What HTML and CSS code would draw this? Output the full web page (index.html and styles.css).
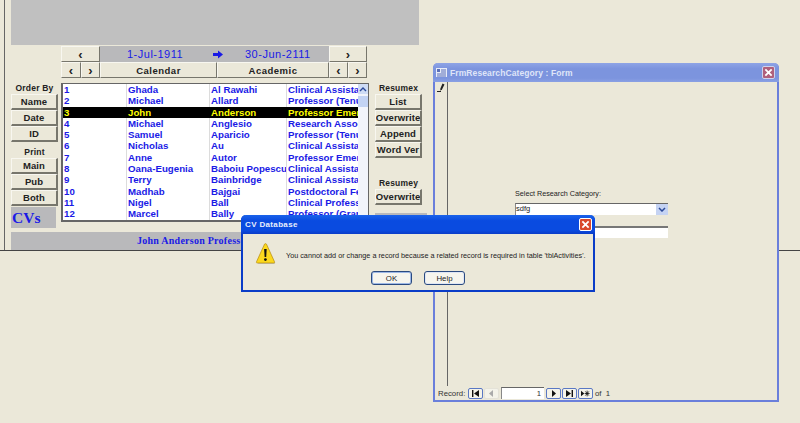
FILE: index.html
```html
<!DOCTYPE html>
<html lang="en">
<head>
<meta charset="utf-8">
<title>CV Database</title>
<link rel="stylesheet" href="styles.css">
</head>
<body>
<div class="desktop">
  <div class="backdrop">
    <div class="form">
      <div class="banner"></div>
      <div class="nav">
        <div class="nav-row">
          <button class="btn nav-wide nav-wide-first">&lsaquo;</button>
          <div class="range">
            <span class="range-from">1-Jul-1911</span>
            <svg class="range-arrow" viewBox="0 0 10 9"><path d="M0 3h5V0.4L10 4.500 5 8.600V6H0z"/></svg>
            <span class="range-to">30-Jun-2111</span>
          </div>
          <button class="btn nav-wide">&rsaquo;</button>
        </div>
        <div class="nav-row">
          <button class="btn nav-small nav-small-first">&lsaquo;</button>
          <button class="btn nav-small">&rsaquo;</button>
          <button class="btn nav-cal">Calendar</button>
          <button class="btn nav-aca">Academic</button>
          <button class="btn nav-small">&lsaquo;</button>
          <button class="btn nav-small">&rsaquo;</button>
        </div>
      </div>
      <div class="main">
        <div class="side side-left">
          <div class="side-label">Order By</div>
          <button class="btn side-btn">Name</button>
          <button class="btn side-btn">Date</button>
          <button class="btn side-btn">ID</button>
          <div class="side-label print-label">Print</div>
          <button class="btn side-btn">Main</button>
          <button class="btn side-btn">Pub</button>
          <button class="btn side-btn">Both</button>
          <div class="cvs">CVs</div>
        </div>
        <div class="list">
          <div class="rows">
            <div class="row"><span>1</span><span>Ghada</span><span>Al Rawahi</span><span>Clinical Assistant</span></div>
            <div class="row"><span>2</span><span>Michael</span><span>Allard</span><span>Professor (Tenure)</span></div>
            <div class="row row-on"><span>3</span><span>John</span><span>Anderson</span><span>Professor Emeritus</span></div>
            <div class="row"><span>4</span><span>Michael</span><span>Anglesio</span><span>Research Associate</span></div>
            <div class="row"><span>5</span><span>Samuel</span><span>Aparicio</span><span>Professor (Tenure)</span></div>
            <div class="row"><span>6</span><span>Nicholas</span><span>Au</span><span>Clinical Assistant</span></div>
            <div class="row"><span>7</span><span>Anne</span><span>Autor</span><span>Professor Emeritus</span></div>
            <div class="row"><span>8</span><span>Oana-Eugenia</span><span>Baboiu Popescu</span><span>Clinical Assistant</span></div>
            <div class="row"><span>9</span><span>Terry</span><span>Bainbridge</span><span>Clinical Assistant</span></div>
            <div class="row"><span>10</span><span>Madhab</span><span>Bajgai</span><span>Postdoctoral Fellow</span></div>
            <div class="row"><span>11</span><span>Nigel</span><span>Ball</span><span>Clinical Professor</span></div>
            <div class="row"><span>12</span><span>Marcel</span><span>Bally</span><span>Professor (Grant)</span></div>
          </div>
          <div class="scroll">
            <div class="scroll-up"><svg viewBox="0 0 8 5"><path d="M1 4l3-3 3 3" fill="none" stroke="#2b4a9a" stroke-width="1.4"/></svg></div>
            <div class="scroll-thumb"></div>
          </div>
        </div>
        <div class="side side-right">
          <div class="side-label">Resumex</div>
          <button class="btn side-btn">List</button>
          <button class="btn side-btn">Overwrite</button>
          <button class="btn side-btn">Append</button>
          <button class="btn side-btn">Word Ver</button>
          <div class="side-label resumey">Resumey</div>
          <button class="btn side-btn">Overwrite</button>
          <div class="side-grey"></div>
        </div>
      </div>
      <div class="footer-bar">John Anderson Professor Emeritus</div>
    </div>
  </div>

  <section class="subform">
    <header class="subform-title">
      <svg class="form-icon" viewBox="0 0 11 9"><rect width="11" height="9" fill="#e8ecf8"/><rect x="1" y="1" width="3" height="3" fill="#5a6fb8"/><path d="M5 2h5M5 4h5M1 6h9M1 8h9" stroke="#5a6fb8"/></svg>
      <span class="subform-name">FrmResearchCategory : Form</span>
      <span class="close close-faded"><svg viewBox="0 0 10 10"><path d="M1.500 1.500l7 7M8.500 1.500l-7 7" stroke="#fff" stroke-width="2"/></svg></span>
    </header>
    <div class="subform-body">
      <div class="selector">
        <svg class="pencil" viewBox="0 0 9 9"><path d="M0 8.500h4" stroke="#222" fill="none"/><path d="M5.500 0.500l2 1-2.500 5-1.800 1.200.2-2.200z" fill="#222"/></svg>
      </div>
      <div class="detail">
        <div class="field-label">Select Research Category:</div>
        <div class="combo"><span>sdfg</span><span class="combo-btn"><svg viewBox="0 0 8 5"><path d="M1 1l3 3 3-3" fill="none" stroke="#2b4a9a" stroke-width="1.500"/></svg></span></div>
        <div class="textbox"></div>
      </div>
    </div>
    <footer class="recnav">
      <span class="rec-label">Record:</span>
      <span class="rec-btn"><svg viewBox="0 0 9 7"><path d="M1 0h1.400v7H1zM8 0v7L3 3.500z"/></svg></span>
      <span class="rec-btn rec-off"><svg viewBox="0 0 9 7"><path d="M6 0v7L2 3.500z"/></svg></span>
      <span class="rec-input">1</span>
      <span class="rec-btn"><svg viewBox="0 0 9 7"><path d="M3 0v7l4-3.500z"/></svg></span>
      <span class="rec-btn"><svg viewBox="0 0 9 7"><path d="M1 0v7l5-3.500zM6.600 0H8v7H6.600z"/></svg></span>
      <span class="rec-btn"><svg viewBox="0 0 11 7"><path d="M0 0v7l4-3.500z"/><path d="M7.500 0v7M4.500 3.500h6M5.400 1l4.200 5M9.600 1L5.400 6" stroke="#111" fill="none"/></svg></span>
      <span class="rec-of">of&nbsp; 1</span>
    </footer>
  </section>

  <section class="dialog">
    <header class="dialog-title">
      <span class="dialog-name">CV Database</span>
      <span class="close"><svg viewBox="0 0 10 10"><path d="M1.500 1.500l7 7M8.500 1.500l-7 7" stroke="#fff" stroke-width="2"/></svg></span>
    </header>
    <div class="dialog-body">
      <div class="dialog-msg">
        <svg class="warn" viewBox="0 0 21 22">
          <path d="M10 1L20 20.500H3z" fill="#6b6b6b" opacity=".55"/>
          <path d="M9.500 1.200c.6-.8 1.400-.8 2 0l8 17.600c.3.800 0 1.200-.8 1.200H2.300c-.8 0-1.100-.4-.8-1.200z" fill="#fbd81e" stroke="#b58a10" stroke-width=".7"/>
          <path d="M9.100 6h2.600l-.5 8h-1.600z" fill="#111"/><circle cx="10.400" cy="16.600" r="1.400" fill="#111"/>
        </svg>
        <p class="dialog-text">You cannot add or change a record because a related record is required in table 'tblActivities'.</p>
      </div>
      <div class="dialog-actions">
        <button class="xp-btn xp-default">OK</button>
        <button class="xp-btn">Help</button>
      </div>
    </div>
  </section>
</div>
</body>
</html>
```

FILE: styles.css
```css
* { box-sizing: border-box; }
html, body { margin: 0; padding: 0; }
body { width: 800px; height: 423px; overflow: hidden; background: #ebe8d9; font-family: "Liberation Sans", Arial, sans-serif; }
button { font-family: inherit; padding: 0; margin: 0; }
.desktop { position: relative; width: 800px; height: 423px; overflow: hidden; }

.backdrop { height: 251px; border-bottom: 1px solid #444; padding-left: 4px; }
.form { height: 250px; border-left: 1px solid #666; padding-left: 6px; }
.banner { width: 408px; height: 45px; background: #c0c0c0; }

.btn {
  display: flex; align-items: center; justify-content: center;
  background: #ebe8d9; color: #222; font-weight: bold; font-size: 9.500px; letter-spacing: .1px;
  border: 1px solid; border-color: #f8f7f0 #77766c #77766c #f8f7f0; white-space: nowrap; overflow: hidden;
}

.nav { margin: 1px 0 0 50px; width: 307px; display: flex; flex-direction: column; }
.nav-row { display: flex; height: 16px; }
.nav-wide { width: 38px; font-size: 13px; }
.nav-wide-first { width: 39px; }
.nav-small { width: 19px; font-size: 13px; }
.nav-small-first { width: 20px; }
.nav-cal { width: 117px; letter-spacing: .5px; }
.nav-aca { width: 112px; letter-spacing: .5px; }
.range { width: 229px; background: #b9b9bb; display: flex; align-items: center; color: #1a1ae6; font-size: 11px; letter-spacing: .5px; }
.range-from { margin-left: 27px; width: 86px; }
.range-arrow { width: 10px; height: 9px; fill: #1a1ae6; }
.range-to { margin-left: 22px; }

.main { display: flex; height: 144px; margin-top: 5px; align-items: flex-start; }
.side { display: flex; flex-direction: column; width: 47px; }
.side-btn { flex: none; height: 16px; border-right-width: 2px; border-bottom-width: 2px; width: 47px; }
.side-label { height: 11px; font-size: 8.500px; font-weight: bold; color: #222; text-align: center; line-height: 11px; letter-spacing: .2px; }
.print-label { margin-top: 7px; height: 6px; line-height: 6px; margin-bottom: 3px; }
.cvs { width: 45px; height: 21px; margin-top: 1px; background: #b9b9bb; color: #1a1ae6; font-family: "Liberation Serif", serif; font-weight: bold; font-size: 15.500px; line-height: 21px; padding-left: 1px; }
.side-right { margin-left: 6px; }
.resumey { margin-top: 20px; }
.side-grey { width: 52px; height: 12px; flex: none; background: #b9b9bb; margin-top: 8px; }

.list { width: 308px; height: 139px; margin-left: 3px; display: flex; background: #fff; border: 1px solid #666; border-left-width: 2px; border-bottom-width: 2px; overflow: hidden; }
.rows { width: 295px; display: grid; grid-auto-rows: 11.300px; align-content: start; }
.row { display: grid; grid-template-columns: 63px 83px 77px 72px; font-size: 9.700px; font-weight: bold; color: #1a1ae6; line-height: 11.300px; }
.row span { overflow: hidden; white-space: nowrap; padding-left: 1px; border-left: 1px solid #dcdcdc; }
.row span:first-child { border-left: 0; }
.row-on { background: #000; color: #ff0; }
.row-on span { border-left-color: #000; }
.scroll { width: 10px; background: #f2f4fb; }
.scroll-up { height: 10px; background: #cfdcf5; display: flex; align-items: center; justify-content: center; }
.scroll-up svg { width: 8px; height: 5px; }
.scroll-thumb { height: 11px; margin-top: 2px; background: #c3d3f4; }

.footer-bar { width: 408px; height: 18px; margin-top: 5px; background: #b9b9bb; color: #1a1ae6; font-family: "Liberation Serif", serif; font-weight: bold; font-size: 10px; letter-spacing: .25px; line-height: 18px; padding-left: 126px; white-space: nowrap; overflow: hidden; }

.subform { position: absolute; left: 433px; top: 63px; width: 346px; height: 339px; display: flex; flex-direction: column; background: #ebe8d9; border: 2px solid #6a7fdb; border-top: 0; border-radius: 5px 5px 0 0; }
.subform-title { flex: none; height: 19px; margin: 0 -2px; background: linear-gradient(#8ea4e6, #7c94de 30%, #7c94de 80%, #8aa0e4); border-radius: 5px 5px 0 0; display: flex; align-items: center; padding: 0 4px 0 3px; color: #dfe5f8; font-size: 8.500px; font-weight: bold; letter-spacing: .1px; }
.form-icon { width: 11px; height: 9px; margin-right: 3px; }
.subform-name { flex: 1; }
.close { width: 13px; height: 13px; border: 1px solid #fff; border-radius: 2px; background: #d9482b; display: flex; align-items: center; justify-content: center; }
.close svg { width: 9px; height: 9px; }
.close-faded { background: #b0607c; border-color: #cfd3ec; }
.subform-body { flex: 1; display: flex; min-height: 0; }
.selector { width: 13px; border-right: 1px solid #666; }
.pencil { display: block; width: 9px; height: 9px; margin: 1px 0 0 2px; }
.detail { flex: 1; padding: 107px 0 0 67px; }
.field-label { font-size: 7.200px; color: #222; height: 14px; line-height: 10px; }
.combo { width: 153px; height: 12px; background: #fff; border-top: 1px solid #666; border-left: 1px solid #888; display: flex; justify-content: space-between; font-size: 7.500px; line-height: 10px; color: #222; }
.combo-btn { width: 12px; background: #c5d3f3; display: flex; align-items: center; justify-content: center; }
.combo-btn svg { width: 8px; height: 5px; }
.textbox { width: 153px; height: 12px; margin-top: 11px; background: #fff; border-top: 2px solid #777; }
.recnav { flex: none; height: 14px; display: flex; align-items: center; padding-left: 3px; font-size: 7.800px; color: #333; }
.rec-label { width: 30px; }
.rec-btn { width: 15px; height: 11px; border: 1px solid #5a78c4; border-radius: 2px; background: #f4f3ea; display: flex; align-items: center; justify-content: center; margin-right: 1px; }
.rec-btn svg { width: 9px; height: 7px; fill: #111; }
.rec-off { border-color: #e4e2d8; }
.rec-off svg { fill: #aaa; }
.rec-input { width: 43px; height: 12px; margin: 0 2px 0 1px; background: #fff; border-top: 1px solid #666; border-left: 1px solid #888; text-align: right; padding-right: 3px; line-height: 11px; }
.rec-of { margin-left: 1px; }

.dialog { position: absolute; left: 241px; top: 215px; width: 354px; height: 77px; display: flex; flex-direction: column; background: #ebe8d9; border: 2px solid #0a3cc8; border-top: 0; border-radius: 5px 5px 0 0; }
.dialog-title { flex: none; height: 19px; margin: 0 -2px; background: linear-gradient(#1a63ea, #0a4be0 30%, #0a4be0 80%, #0a3cc8); border-radius: 5px 5px 0 0; display: flex; align-items: center; justify-content: space-between; padding: 0 3px 0 4px; color: #e8eefc; font-size: 8px; font-weight: bold; letter-spacing: .35px; }
.dialog-body { flex: 1; display: flex; flex-direction: column; padding: 9px 0 0 12px; }
.dialog-msg { display: flex; align-items: center; height: 21px; }
.warn { width: 21px; height: 22px; flex: none; }
.dialog-text { margin: 3px 0 0 10px; font-size: 7.250px; color: #222; white-space: nowrap; }
.dialog-actions { display: flex; justify-content: center; gap: 12px; margin-top: 7px; padding-right: 12px; }
.xp-btn { width: 41px; height: 14px; border: 1px solid #2a4a80; border-radius: 3px; background: #f6f5ee; font-size: 7.800px; color: #222; box-shadow: inset 0 0 0 1px #dfe6f5; }
.xp-default { box-shadow: inset 0 0 0 1px #9db8e6; }
```
